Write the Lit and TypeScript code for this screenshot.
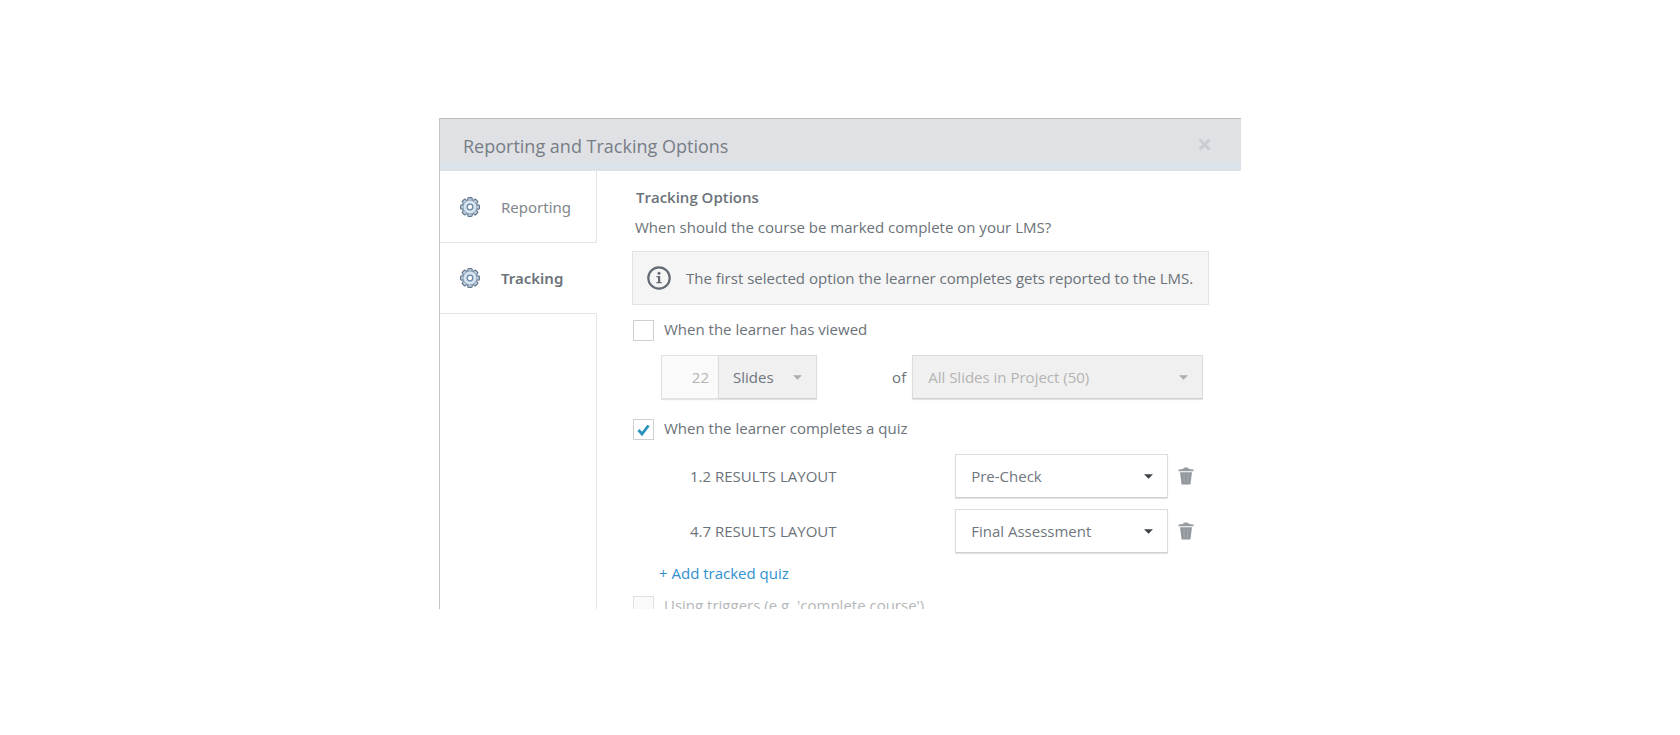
import { LitElement, html, css, svg } from "lit";
import { customElement, property, state } from "lit/decorators.js";
import { classMap } from "lit/directives/class-map.js";

const teeth = Array.from({ length: 8 }, (_, i) => i * 45);

const gearIcon = html`<svg class="gear" viewBox="0 0 20 20" aria-hidden="true">
  ${teeth.map(
    (a) => svg`<rect x="7.8" y="0.6" width="4.4" height="5" rx="1" fill="#c3d5e6" stroke="#66788e" stroke-width="1.2" transform="rotate(${a} 10 10)"></rect>`
  )}
  <circle cx="10" cy="10" r="7" fill="#c9d9e8" stroke="#7f93a8" stroke-width="0.7"></circle>
  <circle cx="10" cy="10" r="5" fill="none" stroke="#dfe9f3" stroke-width="1.4"></circle>
  <circle cx="10" cy="10" r="2.8" fill="#fff" stroke="#6b8bab" stroke-width="1.3"></circle>
</svg>`;

const infoIcon = html`<svg class="info-icon" viewBox="0 0 24 24" aria-hidden="true">
  <circle cx="12" cy="12" r="10.7" fill="none" stroke="#646b74" stroke-width="2.2"></circle>
  <circle cx="12" cy="7.2" r="1.5" fill="#646b74"></circle>
  <path d="M9.400 10h3.800v6h1.500v1.300H9.400V16H11v-4.700H9.400z" fill="#646b74"></path>
</svg>`;

const trashIcon = html`<svg class="trash" viewBox="0 0 16 18" aria-hidden="true">
  <path d="M5 2c0-2 6-2 6 0l4.500.6v1.600H.5V2.600z" fill="#969ca1"></path>
  <path d="M2 5.200h12L12.400 17.500H3.600z" fill="#92989e"></path>
  <path d="M6 7l.4 8.500M10 7l-.4 8.500" stroke="#a5abb0" stroke-width="0.8"></path>
</svg>`;

@customElement("option-select")
class OptionSelect extends LitElement {
  @property() label = "";
  @property({ type: Array }) options: string[] = [];
  @property({ type: Boolean }) disabled = false;
  @property({ type: Boolean }) strong = false;

  static styles = css`
    :host {
      display: block;
    }
    .box {
      display: grid;
      grid-template-columns: 1fr 40px;
      align-items: center;
    }
    select {
      grid-area: 1 / 1 / 2 / 3;
      appearance: none;
      box-sizing: border-box;
      width: 100%;
      height: 44px;
      margin: 0;
      padding: 0 40px 0 15px;
      font: inherit;
      color: #6f767d;
      background: #fff;
      border: 1px solid #dcdcdc;
      border-bottom-color: #cfcfcf;
      border-radius: 1px;
      box-shadow: 0 1px 1px #e0e0e0;
      opacity: 1;
    }
    .off select {
      color: #b4b4b4;
      background: #f0f0f0;
    }
    .strong select {
      color: #6f767d;
      padding-left: 14px;
      padding-right: 30px;
    }
    .caret {
      grid-area: 1 / 2;
      justify-self: center;
      width: 9px;
      height: 5px;
      pointer-events: none;
      fill: #3f4347;
    }
    .off .caret {
      fill: #adadad;
    }
  `;

  render() {
    return html`<div class=${classMap({ box: true, off: this.disabled, strong: this.strong })}>
      <select aria-label=${this.label} ?disabled=${this.disabled}>
        ${this.options.map((o) => html`<option>${o}</option>`)}
      </select>
      <svg class="caret" viewBox="0 0 10 5" aria-hidden="true"><path d="M0 0h10L5 5z"></path></svg>
    </div>`;
  }
}

@customElement("app-root")
class AppRoot extends LitElement {
  @state() private tab = "Tracking";
  @state() private quizzes = [
    { name: "1.2 RESULTS LAYOUT", options: ["Pre-Check", "Final Assessment"] },
    { name: "4.7 RESULTS LAYOUT", options: ["Final Assessment", "Pre-Check"] },
  ];

  static styles = css`
    :host {
      display: block;
      box-sizing: border-box;
      min-height: 100vh;
      padding: 118px 24px 0;
      background: #fff;
      color: #6b7279;
      font: 15px/20px "Open Sans", "Noto Sans", sans-serif;
    }
    .dialog {
      box-sizing: border-box;
      display: flex;
      flex-direction: column;
      max-width: 802px;
      max-height: calc(100vh - 244px);
      margin: 0 auto;
      overflow: hidden;
      border-left: 1px solid #c2c2c4;
    }
    header {
      display: flex;
      flex: none;
      align-items: center;
      justify-content: space-between;
      box-sizing: border-box;
      height: 53px;
      padding: 2px 28px 0 23px;
      border-top: 1px solid #b9bbbf;
      background: linear-gradient(#dfe1e5 0 43px, #dae2ea 43px);
    }
    h1 {
      margin: 0;
      font-size: 18px;
      line-height: 24px;
      font-weight: 400;
      color: #777d86;
    }
    button {
      font: inherit;
      color: inherit;
      margin: 0;
      padding: 0;
      border: 0;
      background: none;
      cursor: pointer;
    }
    .close {
      display: flex;
      padding: 0 2px 4px;
    }
    .close svg {
      width: 13px;
      height: 13px;
    }
    .body {
      display: grid;
      grid-template-columns: 157px 1fr;
      min-height: 0;
      overflow: hidden;
    }
    nav {
      display: flex;
      flex-direction: column;
    }
    .tab {
      display: flex;
      flex: none;
      align-items: center;
      gap: 21px;
      box-sizing: border-box;
      height: 71px;
      padding-left: 20px;
      font-family: "Noto Sans", "Open Sans", sans-serif;
      color: #82878c;
      border-bottom: 1px solid #e4e4e4;
      border-right: 1px solid #e4e4e4;
    }
    .tab:first-child {
      height: 72px;
      padding-top: 1px;
    }
    .tab.active {
      font-weight: 600;
      color: #6b7279;
      border-right-color: transparent;
    }
    .rest {
      flex: 1;
      border-right: 1px solid #e4e4e4;
    }
    .gear {
      width: 20px;
      height: 20px;
    }
    main {
      padding: 16px 32px 0 35px;
    }
    h2 {
      margin: 0;
      padding-left: 4px;
      font-size: 15px;
      line-height: 20px;
      font-weight: 600;
    }
    .question {
      margin: 10px 0 14px;
      padding-left: 3px;
    }
    .info {
      display: flex;
      align-items: center;
      gap: 15px;
      box-sizing: border-box;
      height: 54px;
      padding: 0 15px 0 14px;
      white-space: nowrap;
      background: #f5f5f5;
      border: 1px solid #e2e2e2;
    }
    .info-icon {
      flex: none;
      width: 24px;
      height: 24px;
    }
    .check {
      display: flex;
      align-items: flex-start;
      gap: 10px;
      padding-left: 1px;
      line-height: 18px;
    }
    .check input {
      appearance: none;
      flex: none;
      box-sizing: border-box;
      width: 21px;
      height: 21px;
      margin: 0;
      border: 1px solid #cfcfcf;
      background: #fff;
    }
    .tick {
      display: grid;
    }
    .tick > * {
      grid-area: 1 / 1;
    }
    .tick svg {
      place-self: center;
      width: 13px;
      height: 12px;
      pointer-events: none;
      visibility: hidden;
    }
    .tick input:checked + svg {
      visibility: visible;
    }
    .viewed {
      margin-top: 15px;
    }
    .slides {
      display: flex;
      align-items: center;
      margin: 14px 6px 20px 29px;
    }
    .slides input {
      box-sizing: border-box;
      width: 57px;
      height: 44px;
      padding: 0 9px;
      font: inherit;
      text-align: right;
      color: #b4b4b4;
      background: #fafafa;
      border: 1px solid #e2e2e2;
      border-right: 0;
      box-shadow: 0 1px 1px #e4e4e4;
    }
    .unit {
      width: 99px;
    }
    .of {
      margin-left: auto;
      margin-right: 6px;
    }
    .scope {
      width: 291px;
    }
    .quizzes {
      display: grid;
      gap: 11px;
      margin: 14px 15px 0 58px;
      padding: 0;
      list-style: none;
    }
    .quiz {
      display: flex;
      align-items: center;
    }
    .quiz-name {
      flex: 1;
    }
    .layout {
      width: 213px;
    }
    .remove {
      display: flex;
      margin-left: 10px;
    }
    .trash {
      width: 16px;
      height: 18px;
    }
    .add {
      display: block;
      width: max-content;
      margin: 10px 0 13px 27px;
      color: #3191cf;
      text-decoration: none;
    }
    .faded {
      color: #b4b7ba;
    }
    .faded input {
      border-color: #e0e0e0;
      background: #fafafa;
    }
  `;

  private renderTab(name: string) {
    return html`<button
      class=${classMap({ tab: true, active: this.tab === name })}
      @click=${() => (this.tab = name)}
    >
      ${gearIcon}<span>${name}</span>
    </button>`;
  }

  private renderCheck(text: string, checked: boolean, cls: string) {
    return html`<label class="check ${cls}">
      <span class="tick">
        <input type="checkbox" .checked=${checked} />
        <svg viewBox="0 0 13 12" aria-hidden="true">
          <path d="M1.500 6l3.500 4 6.500-8.500" fill="none" stroke="#2793ba" stroke-width="2.800"></path>
        </svg>
      </span>
      <span>${text}</span>
    </label>`;
  }

  private addQuiz(e: Event) {
    e.preventDefault();
    this.quizzes = [...this.quizzes, { name: "RESULTS LAYOUT", options: ["Pre-Check", "Final Assessment"] }];
  }

  render() {
    return html`<section class="dialog" role="dialog" aria-labelledby="title">
      <header>
        <h1 id="title">Reporting and Tracking Options</h1>
        <button class="close" aria-label="Close">
          <svg viewBox="0 0 13 13" aria-hidden="true">
            <path d="M1.500 1.500l10 10M11.500 1.500l-10 10" stroke="#c9ccd0" stroke-width="3"></path>
          </svg>
        </button>
      </header>
      <div class="body">
        <nav>${this.renderTab("Reporting")}${this.renderTab("Tracking")}<div class="rest"></div></nav>
        <main>
          <h2>Tracking Options</h2>
          <p class="question">When should the course be marked complete on your LMS?</p>
          <div class="info">
            ${infoIcon}<span>The first selected option the learner completes gets reported to the LMS.</span>
          </div>
          ${this.renderCheck("When the learner has viewed", false, "viewed")}
          <div class="slides">
            <input type="text" value="22" aria-label="Slides viewed" disabled />
            <option-select class="unit" label="Unit" .options=${["Slides"]} disabled strong></option-select>
            <span class="of">of</span>
            <option-select class="scope" label="Scope" .options=${["All Slides in Project (50)"]} disabled></option-select>
          </div>
          ${this.renderCheck("When the learner completes a quiz", true, "")}
          <ul class="quizzes">
            ${this.quizzes.map(
              (q) => html`<li class="quiz">
                <span class="quiz-name">${q.name}</span>
                <option-select class="layout" label=${q.name} .options=${q.options}></option-select>
                <button
                  class="remove"
                  aria-label="Remove ${q.name}"
                  @click=${() => (this.quizzes = this.quizzes.filter((x) => x !== q))}
                >
                  ${trashIcon}
                </button>
              </li>`
            )}
          </ul>
          <a class="add" href="#" @click=${this.addQuiz}>+ Add tracked quiz</a>
          ${this.renderCheck("Using triggers (e.g. 'complete course')", false, "faded")}
        </main>
      </div>
    </section>`;
  }
}
